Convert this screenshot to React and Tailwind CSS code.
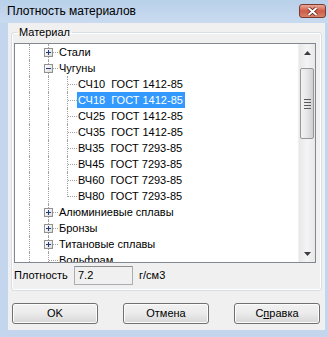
import React from 'react';

const rows = [
  { label: 'Стали', level: 1, box: 'plus' },
  { label: 'Чугуны', level: 1, box: 'minus' },
  { label: 'СЧ10  ГОСТ 1412-85', level: 2 },
  { label: 'СЧ18  ГОСТ 1412-85', level: 2, selected: true },
  { label: 'СЧ25  ГОСТ 1412-85', level: 2 },
  { label: 'СЧ35  ГОСТ 1412-85', level: 2 },
  { label: 'ВЧ35  ГОСТ 7293-85', level: 2 },
  { label: 'ВЧ45  ГОСТ 7293-85', level: 2 },
  { label: 'ВЧ60  ГОСТ 7293-85', level: 2 },
  { label: 'ВЧ80  ГОСТ 7293-85', level: 2, last: true },
  { label: 'Алюминиевые сплавы', level: 1, box: 'plus' },
  { label: 'Бронзы', level: 1, box: 'plus' },
  { label: 'Титановые сплавы', level: 1, box: 'plus' },
  { label: 'Вольфрам', level: 1 },
];

function ExpandBox({ kind }) {
  return (
    <span className="absolute left-[5px] top-[4px] w-[9px] h-[9px] border border-[#919191] bg-gradient-to-br from-white to-[#dcdcdc] flex items-center justify-center">
      <span className="relative w-[5px] h-[5px] flex items-center justify-center">
        <span className="absolute w-[5px] h-[1px] bg-[#1f3a7a]" />
        {kind === 'plus' && <span className="absolute w-[1px] h-[5px] bg-[#1f3a7a]" />}
      </span>
    </span>
  );
}

// one indent column of the tree: vertical guide, optional connector and box
function Guide({ vertical = 'full', connector = false, box }) {
  return (
    <span className="relative w-[19px] shrink-0">
      {vertical === 'full' && (
        <span className="absolute left-[9px] top-0 bottom-0 border-l border-dotted border-[#a0a0a0]" />
      )}
      {vertical === 'half' && (
        <span className="absolute left-[9px] top-0 h-[9px] border-l border-dotted border-[#a0a0a0]" />
      )}
      {connector && (
        <span className="absolute left-[10px] right-0 top-[8px] border-t border-dotted border-[#a0a0a0]" />
      )}
      {box && <ExpandBox kind={box} />}
    </span>
  );
}

function TreeRow({ row }) {
  return (
    <div className="flex h-[16px] shrink-0">
      <Guide />
      {row.level === 1 ? (
        <Guide connector box={row.box} />
      ) : (
        <>
          <Guide />
          <Guide vertical={row.last ? 'half' : 'full'} connector />
        </>
      )}
      <span
        className={`whitespace-pre leading-[16px] pl-[1px] pr-[2px] ${
          row.selected ? 'bg-[#3399ff] text-white' : 'text-black'
        }`}
      >
        {row.label}
      </span>
    </div>
  );
}

function Arrow({ up }) {
  return (
    <svg width="7" height="4" viewBox="0 0 7 4">
      <path d={up ? 'M3.5 0 L7 4 L0 4 Z' : 'M0 0 L7 0 L3.5 4 Z'} fill="#3d3d3d" />
    </svg>
  );
}

function ScrollBar() {
  return (
    <div className="w-[17px] shrink-0 flex flex-col bg-gradient-to-r from-[#e8e8e8] via-[#f4f4f4] to-[#e8e8e8] border-l border-[#f0f0f0]">
      <div className="h-[17px] flex items-center justify-center">
        <Arrow up />
      </div>
      <div className="flex-1 flex flex-col pt-[7px]">
        <div className="mx-[1px] h-[71px] rounded-[2px] border border-[#979797] bg-gradient-to-r from-[#f3f3f3] via-[#e6e6e6] to-[#cfcfcf] flex flex-col items-center justify-center gap-[2px]">
          <span className="w-[7px] h-[1px] bg-[#5a5a5a]" />
          <span className="w-[7px] h-[1px] bg-[#5a5a5a]" />
          <span className="w-[7px] h-[1px] bg-[#5a5a5a]" />
          <span className="w-[7px] h-[1px] bg-[#5a5a5a]" />
        </div>
      </div>
      <div className="h-[17px] flex items-center justify-center">
        <Arrow />
      </div>
    </div>
  );
}

function WinButton({ children }) {
  return (
    <button className="w-[86px] h-[21px] rounded-[3px] border border-[#707070] bg-gradient-to-b from-[#f2f2f2] via-[#ebebeb] to-[#d6d6d6] text-[11px] text-black leading-none shadow-[inset_0_0_0_1px_#fcfcfc]">
      {children}
    </button>
  );
}

export default function App() {
  return (
    <div
      className="w-[328px] h-[337px] flex flex-col bg-[#c3d6ed] overflow-hidden"
      style={{ fontFamily: '"Liberation Sans", Arial, sans-serif' }}
    >
      {/* Title bar */}
      <div className="h-[23px] shrink-0 flex items-start justify-between pl-[7px] bg-gradient-to-b from-[#b9d0ea] to-[#c9dbf0]">
        <span className="text-[12px] leading-[20px] mt-[1px] text-black">Плотность материалов</span>
        <div className="mt-[4px] mr-[2px] w-[27px] h-[14px] rounded-[3px] border border-[#7a3a30] bg-gradient-to-b from-[#e9a99a] via-[#cf5a45] to-[#d8826a] flex items-center justify-center">
          <svg width="11" height="9" viewBox="0 0 11 9">
            <path d="M1.5 1 L9.5 8 M9.5 1 L1.5 8" stroke="#5a1d14" strokeWidth="3.4" />
            <path d="M1.5 1 L9.5 8 M9.5 1 L1.5 8" stroke="#ffffff" strokeWidth="2" />
          </svg>
        </div>
      </div>

      {/* Client area */}
      <div className="flex-1 ml-[8px] mr-[3px] mb-[7px] bg-[#f0f0f0] flex flex-col px-[3px] text-[11px]">
        <fieldset className="mt-[3px] border border-[#d5dfe5] rounded-[3px] shadow-[inset_0_0_0_1px_#ffffff] pl-[2px] pr-[5px] pb-[5px]">
          <legend className="ml-[3px] px-[2px] text-[11px] leading-[13px] text-black">Материал</legend>

          <div className="mt-[4px] h-[220px] border border-[#828790] bg-white flex overflow-hidden">
            <div className="flex-1 flex flex-col overflow-hidden pl-[5px] text-[11px]">
              {rows.map((row) => (
                <TreeRow key={row.label} row={row} />
              ))}
            </div>
            <ScrollBar />
          </div>

          <div className="mt-[3px] flex items-center h-[19px]">
            <span className="text-black w-[60px]">Плотность</span>
            <div className="w-[59px] h-[19px] border border-[#abadb3] border-t-[#8e8f8f] bg-[#f0f0f0] flex items-center pl-[3px] text-black">
              7.2
            </div>
            <span className="ml-[6px] text-black">г/см3</span>
          </div>
        </fieldset>

        <div className="mt-[12px] flex gap-[25px] px-[1px]">
          <WinButton>OK</WinButton>
          <WinButton>Отмена</WinButton>
          <WinButton>
            С<span className="underline">п</span>равка
          </WinButton>
        </div>
      </div>
    </div>
  );
}
